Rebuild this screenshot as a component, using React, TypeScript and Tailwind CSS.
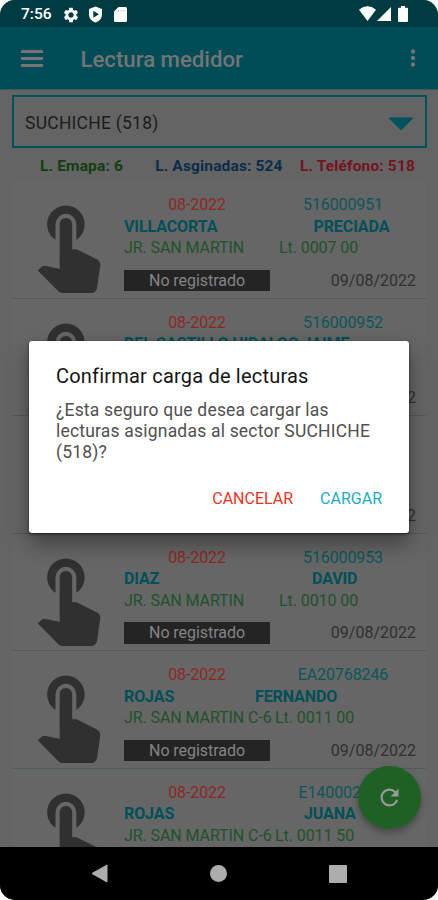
import React from 'react';
import { MdMoreVert, MdRefresh, MdSettings, MdTouchApp } from 'react-icons/md';

type Reading = {
  period: string;
  code: string;
  surname: string;
  surnameClass: string;
  name: string;
  street: string;
  streetClass: string;
  lot: string;
  status: string;
  date: string;
};

const readings: Reading[] = [
  { period: '08-2022', code: '516000951', surname: 'VILLACORTA', surnameClass: 'w-[189.5px]', name: 'PRECIADA', street: 'JR. SAN MARTIN', streetClass: 'w-[155px]', lot: 'Lt. 0007 00', status: 'No registrado', date: '09/08/2022' },
  { period: '08-2022', code: '516000952', surname: 'DEL CASTILLO HIDALGO', surnameClass: 'mr-[4px]', name: 'JAIME', street: 'JR. SAN MARTIN', streetClass: 'w-[155px]', lot: 'Lt. 0008 00', status: 'No registrado', date: '09/08/2022' },
  { period: '08-2022', code: '516000954', surname: 'DIAZ', surnameClass: 'w-[188px]', name: 'DAVID', street: 'JR. SAN MARTIN', streetClass: 'w-[155px]', lot: 'Lt. 0009 00', status: 'No registrado', date: '09/08/2022' },
  { period: '08-2022', code: '516000953', surname: 'DIAZ', surnameClass: 'w-[188px]', name: 'DAVID', street: 'JR. SAN MARTIN', streetClass: 'w-[155px]', lot: 'Lt. 0010 00', status: 'No registrado', date: '09/08/2022' },
  { period: '08-2022', code: 'EA20768246', surname: 'ROJAS', surnameClass: 'w-[131px]', name: 'FERNANDO', street: 'JR. SAN MARTIN C-6', streetClass: 'w-[151px]', lot: 'Lt. 0011 00', status: 'No registrado', date: '09/08/2022' },
  { period: '08-2022', code: 'E140002751', surname: 'ROJAS', surnameClass: 'w-[180px]', name: 'JUANA', street: 'JR. SAN MARTIN C-6', streetClass: 'w-[151px]', lot: 'Lt. 0011 50', status: 'No registrado', date: '09/08/2022' },
];

const StatusBar: React.FC = () => (
  <div className="flex h-[27px] shrink-0 items-center justify-between bg-[#003b41] pl-[21px] pr-[30px] text-white">
    <div className="flex items-center pt-[2px]">
      <span className="w-[41px] text-[15.5px] font-medium leading-none">7:56</span>
      <MdSettings className="size-[18px]" />
      <svg className="ml-[8px] h-[17px] w-[15px]" viewBox="0 0 15 17">
        <path d="M7.5 0.5 14 3v5.5c0 3.8-2.8 6.8-6.5 8C3.8 15.3 1 12.3 1 8.5V3Z" fill="#fff" />
        <path d="M5.3 4.8v7l5.7-3.5Z" fill="#003b41" />
      </svg>
      <svg className="ml-[11px] h-[15px] w-[13px]" viewBox="0 0 13 15">
        <path d="M4.5 0H11.5Q13 0 13 1.5V13.5Q13 15 11.5 15H1.5Q0 15 0 13.5V4.5Z" fill="#fff" />
        <path d="M4.5 3v1.5M7.2 3v1.5M9.9 3v1.5" stroke="#9fb5b8" strokeWidth="1" />
      </svg>
    </div>
    <div className="flex items-center">
      <svg className="h-[15px] w-[17px]" viewBox="0 0 18 14" preserveAspectRatio="none">
        <path d="M0 3.5Q9-3 18 3.5L9 14Z" fill="#fff" />
      </svg>
      <svg className="ml-[1px] size-[14px]" viewBox="0 0 14 14">
        <path d="M14 0v14H0Z" fill="#fff" />
      </svg>
      <svg className="ml-[7px] h-[16px] w-[10px]" viewBox="0 0 10 16">
        <path d="M3 0h4v1.7h2q1 0 1 1V15q0 1-1 1H1q-1 0-1-1V2.7q0-1 1-1h2Z" fill="#fff" />
      </svg>
    </div>
  </div>
);

const Toolbar: React.FC = () => (
  <header className="flex h-[62px] shrink-0 items-center bg-[#004d57] pl-[21px] text-[#747474]">
    <button className="flex w-[21.5px] flex-col gap-[4px]" aria-label="Menu">
      <span className="h-[3px] w-full bg-current" />
      <span className="h-[3px] w-full bg-current" />
      <span className="h-[3px] w-full bg-current" />
    </button>
    <h1 className="ml-[38px] pt-[3px] text-[22.2px] font-medium">Lectura medidor</h1>
    <MdMoreVert className="ml-auto mr-[12px] size-[26px]" />
  </header>
);

const ReadingRow: React.FC<{ reading: Reading }> = ({ reading }) => (
  <div className="flex h-[117.6px] shrink-0 border-b-[1.5px] border-[#4e5b5c] bg-[#666666]">
    <MdTouchApp className="ml-[6px] mt-[12px] size-[100px] shrink-0 text-[#303030]" />
    <div className="ml-[6px] flex-1 pr-[10px] pt-[13px] text-[16px] leading-[21.5px] whitespace-nowrap">
      <div className="flex tracking-[-0.1px]">
        <span className="w-[146px] text-center text-[#8f2626]">{reading.period}</span>
        <span className="flex-1 text-center text-[#0b565d]">{reading.code}</span>
      </div>
      <div className="flex font-bold tracking-[-0.1px] text-[#005059]">
        <span className={`shrink-0 ${reading.surnameClass}`}>{reading.surname}</span>
        <span>{reading.name}</span>
      </div>
      <div className="flex tracking-[-0.08px] text-[#20522a]">
        <span className={`shrink-0 ${reading.streetClass}`}>{reading.street}</span>
        <span>{reading.lot}</span>
      </div>
      <div className="mt-[11px] flex items-center justify-between">
        <span className="w-[146px] bg-[#242424] pt-px text-center leading-[20.5px] tracking-[-0.05px] text-[#858585]">{reading.status}</span>
        <span className="pt-px leading-[20.5px] text-[#303030]">{reading.date}</span>
      </div>
    </div>
  </div>
);

const ConfirmDialog: React.FC = () => (
  <div
    role="dialog"
    className="absolute left-[29px] top-[341px] h-[192px] w-[380px] rounded-[3px] bg-white px-[27px] pt-[23px] shadow-[0_10px_22px_rgba(0,0,0,0.4),0_1px_3px_rgba(0,0,0,0.5)]"
  >
    <h2 className="text-[20px] leading-[24px] tracking-[0.2px] text-[#151515]">Confirmar carga de lecturas</h2>
    <p className="mt-[12px] w-[325px] text-[17.5px] leading-[21px] tracking-[0.2px] text-[#505050]">
      ¿Esta seguro que desea cargar las lecturas asignadas al sector SUCHICHE (518)?
    </p>
    <div className="mt-[25px] flex justify-end gap-[27px] text-[16px] leading-[22px]">
      <button className="text-[#ef3124]">CANCELAR</button>
      <button className="text-[#1cacc8]">CARGAR</button>
    </div>
  </div>
);

const NavigationBar: React.FC = () => (
  <nav className="flex h-[53px] shrink-0 items-center justify-between bg-black pl-[91px] pr-[91px]">
    <svg className="h-[19px] w-[17px]" viewBox="0 0 17 19">
      <path d="M16 1v17L1 9.5Z" fill="#adadad" stroke="#adadad" strokeLinejoin="round" />
    </svg>
    <span className="size-[17px] rounded-full bg-[#adadad]" />
    <span className="size-[18px] rounded-[1px] bg-[#adadad]" />
  </nav>
);

const App: React.FC = () => {
  return (
    <div className="h-[900px] w-[438px] bg-white font-['Roboto',sans-serif]">
      <div className="relative flex h-full flex-col overflow-hidden rounded-[15px] bg-[#646464]">
        <StatusBar />
        <Toolbar />
        <main className="flex min-h-0 flex-1 flex-col overflow-hidden border-t border-[#395b5f] px-[12px] pt-[5px]">
          <div className="flex h-[53px] w-[415px] shrink-0 items-center justify-between border-2 border-[#00535d] pl-[11px] pr-[11px] text-[17.5px] tracking-[0.25px] text-[#1c1c1c]">
            <span className="pt-[4px]">SUCHICHE (518)</span>
            <svg className="mt-[5px] h-[14px] w-[26px]" viewBox="0 0 26 14">
              <path d="M1 1h24L13 13Z" fill="#00535d" stroke="#00535d" strokeLinejoin="round" />
            </svg>
          </div>
          <div className="flex h-[33px] shrink-0 items-center justify-between pl-[28px] pr-[11px] pt-[5px] text-[15.5px] font-bold tracking-[0.15px]">
            <span className="text-[#123f12]">L. Emapa: 6</span>
            <span className="ml-[15px] text-[#0c2d4a]">L. Asginadas: 524</span>
            <span className="text-[#741420]">L. Teléfono: 518</span>
          </div>
          {readings.map((reading) => (
            <ReadingRow key={reading.code} reading={reading} />
          ))}
        </main>
        <NavigationBar />
        <button
          aria-label="Actualizar"
          className="absolute left-[358px] top-[766px] flex size-[63px] items-center justify-center rounded-full bg-[#1f6124] text-[#999999] shadow-[0_4px_7px_rgba(0,0,0,0.3)]"
        >
          <MdRefresh className="size-[27px]" />
        </button>
        <ConfirmDialog />
      </div>
    </div>
  );
};

export default App;
